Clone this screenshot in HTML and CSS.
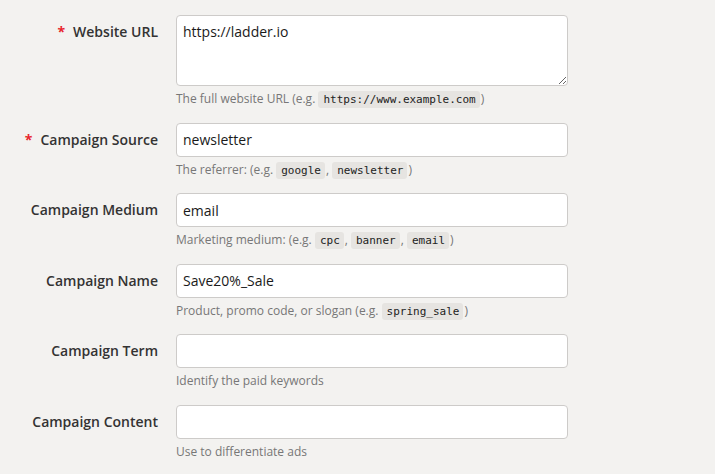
FILE: index.html
```html
<!DOCTYPE html>
<html>
<head>
<meta charset="utf-8">
<link rel="stylesheet" href="styles.css">
</head>
<body>
<form class="form">
  <div class="row">
    <label class="label"><span class="req">*</span>Website URL</label>
    <div class="field">
      <textarea class="control area">https://ladder.io</textarea>
      <div class="help">The full website URL (e.g. <code>https://www.example.com</code>)</div>
    </div>
  </div>
  <div class="row">
    <label class="label"><span class="req">*</span>Campaign Source</label>
    <div class="field">
      <input class="control" type="text" value="newsletter">
      <div class="help">The referrer: (e.g. <code>google</code>, <code>newsletter</code>)</div>
    </div>
  </div>
  <div class="row">
    <label class="label">Campaign Medium</label>
    <div class="field">
      <input class="control" type="text" value="email">
      <div class="help">Marketing medium: (e.g. <code>cpc</code>, <code>banner</code>, <code>email</code>)</div>
    </div>
  </div>
  <div class="row">
    <label class="label">Campaign Name</label>
    <div class="field">
      <input class="control" type="text" value="Save20%_Sale">
      <div class="help">Product, promo code, or slogan (e.g. <code>spring_sale</code>)</div>
    </div>
  </div>
  <div class="row">
    <label class="label">Campaign Term</label>
    <div class="field">
      <input class="control" type="text" value="">
      <div class="help">Identify the paid keywords</div>
    </div>
  </div>
  <div class="row">
    <label class="label">Campaign Content</label>
    <div class="field">
      <input class="control" type="text" value="">
      <div class="help">Use to differentiate ads</div>
    </div>
  </div>
</form>
</body>
</html>
```

FILE: styles.css
```css
html, body {
  margin: 0;
  padding: 0;
  background: #f3f2f0;
}
body {
  font-family: "Open Sans", "Liberation Sans", sans-serif;
  font-size: 14px;
  color: #333;
}
.form {
  padding: 15px 0 0 8px;
  display: flex;
  flex-direction: column;
  gap: 15px;
}
.row {
  display: grid;
  grid-template-columns: 150px 392px;
  column-gap: 18px;
}
.label {
  text-align: right;
  font-weight: 600;
  line-height: 20px;
  padding-top: 7px;
  color: #333;
}
.req {
  color: #e8262e;
  font-weight: 700;
  margin-right: 8px;
}
.field {
  display: flex;
  flex-direction: column;
}
.control {
  display: block;
  box-sizing: border-box;
  width: 392px;
  height: 34px;
  margin: 0;
  padding: 6px 6px;
  border: 1px solid #cdcbc9;
  border-radius: 4px;
  background: #fff;
  font-family: "Open Sans", "Liberation Sans", sans-serif;
  font-size: 14px;
  line-height: 20px;
  color: #1a1a1a;
  outline: none;
}
.area {
  height: 71px;
  resize: vertical;
}
.help {
  margin-top: 5px;
  height: 16.5px;
  font-size: 12px;
  line-height: 16.5px;
  color: #777;
}
code {
  font-family: "DejaVu Sans Mono", "Liberation Mono", monospace;
  font-size: 11px;
  line-height: 1;
  color: #222;
  background: #e6e4e1;
  border-radius: 3px;
  padding: 2px 4px 2px 5px;
  margin: 0 1px 0 0;
}
```
